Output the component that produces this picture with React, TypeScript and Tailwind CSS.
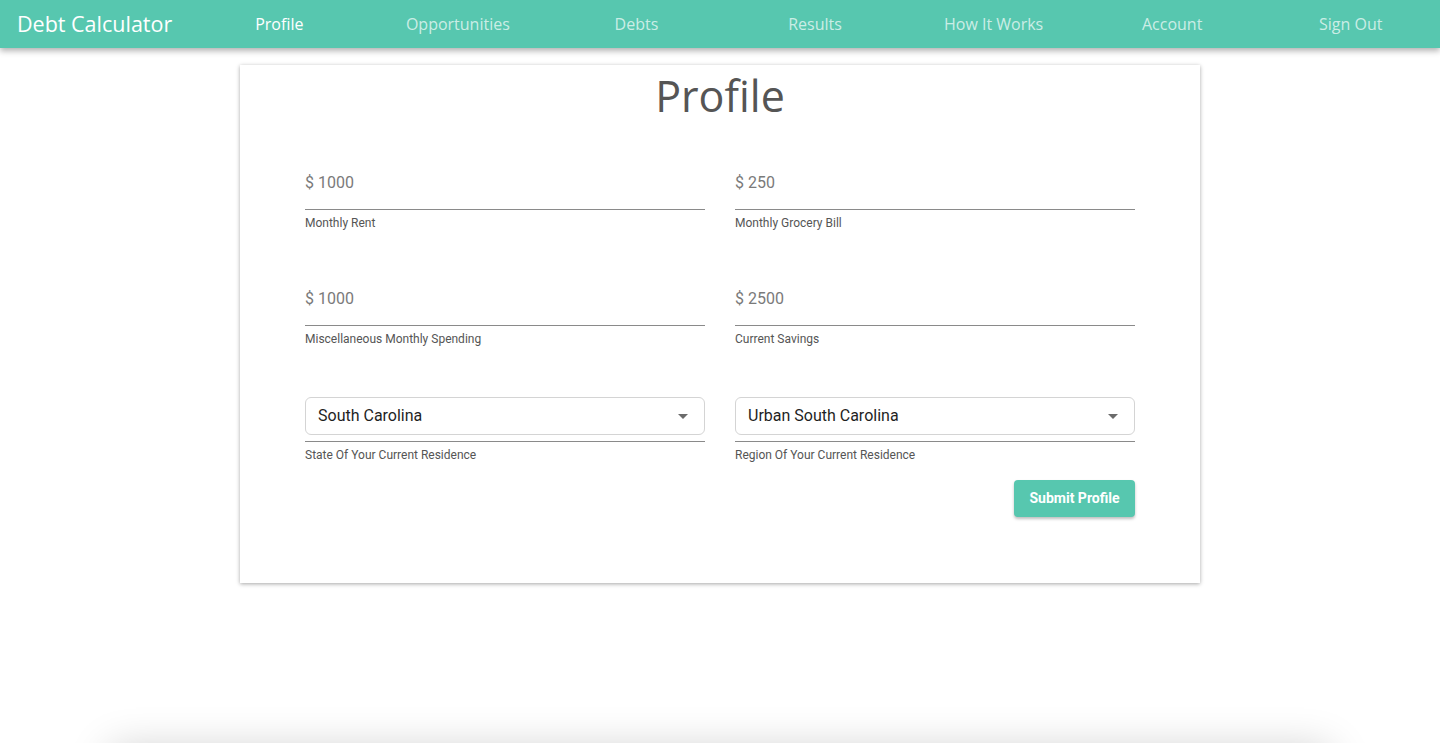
import React from 'react';

const links = ['Profile', 'Opportunities', 'Debts', 'Results', 'How It Works', 'Account', 'Sign Out'];

const headFont = { fontFamily: '"Open Sans", "Liberation Sans", sans-serif' };
const bodyFont = { fontFamily: 'Roboto, "Liberation Sans", sans-serif' };

const MoneyField: React.FC<{ value: string; label: string }> = ({ value, label }) => (
  <div className="flex flex-col">
    <div className="border-b border-[#8a8a8a] pb-[14px] pt-[1px] text-[16px] leading-6 text-[#7a7a7a]">$ {value}</div>
    <div className="mt-[5px] text-[12px] leading-4 text-[#555]">{label}</div>
  </div>
);

const SelectField: React.FC<{ value: string; label: string }> = ({ value, label }) => (
  <div className="flex flex-col">
    <div className="border-b border-[#8a8a8a] pb-[6px]">
      <div className="flex h-[38px] items-center justify-between rounded-md border border-[#d4d4d4] pl-[12px] pr-[16px] text-[16px] text-[#1f1f1f]">
        <span>{value}</span>
        <svg width="10" height="5" viewBox="0 0 10 5">
          <path d="M0 0h10L5 5z" fill="#6b6b6b" />
        </svg>
      </div>
    </div>
    <div className="mt-[5px] text-[12px] leading-4 text-[#555]">{label}</div>
  </div>
);

export default function App() {
  return (
    <div className="min-h-screen bg-white" style={bodyFont}>
      {/* Navbar */}
      <nav className="flex h-12 items-center bg-[#57c7af] shadow-[0_3px_6px_rgba(0,0,0,0.3)]" style={headFont}>
        <div className="w-[190px] pl-[17px] text-[21.5px] text-white">Debt Calculator</div>
        <div className="flex flex-1">
          {links.map((l, i) => (
            <div key={l} className={`flex-1 text-center text-[16px] ${i === 0 ? 'text-white' : 'text-white/70'}`}>
              {l}
            </div>
          ))}
        </div>
      </nav>

      {/* Card */}
      <div className="mx-auto mt-[17px] w-[960px] bg-white px-[65px] pb-[66px] pt-[5px] shadow-[0_1px_4px_rgba(0,0,0,0.35)]">
        <h1 className="mb-[48px] text-center text-[43px] leading-[52px] text-[#555]" style={headFont}>
          Profile
        </h1>

        <div className="grid grid-cols-2 gap-x-[30px]">
          <MoneyField value="1000" label="Monthly Rent" />
          <MoneyField value="250" label="Monthly Grocery Bill" />
        </div>
        <div className="mt-[55px] grid grid-cols-2 gap-x-[30px]">
          <MoneyField value="1000" label="Miscellaneous Monthly Spending" />
          <MoneyField value="2500" label="Current Savings" />
        </div>
        <div className="mt-[50px] grid grid-cols-2 gap-x-[30px]">
          <SelectField value="South Carolina" label="State Of Your Current Residence" />
          <SelectField value="Urban South Carolina" label="Region Of Your Current Residence" />
        </div>

        <div className="mt-[17px] flex justify-end">
          <button className="h-[37px] w-[121px] rounded bg-[#57c7af] text-[14px] font-bold text-white shadow-[0_2px_3px_rgba(0,0,0,0.25)]">
            Submit Profile
          </button>
        </div>
      </div>

      {/* Next section (just below the fold) */}
      <div className="mx-auto mt-[166px] h-[200px] w-[1220px] bg-white shadow-[0_0_40px_rgba(0,0,0,0.2)]" />
    </div>
  );
}
